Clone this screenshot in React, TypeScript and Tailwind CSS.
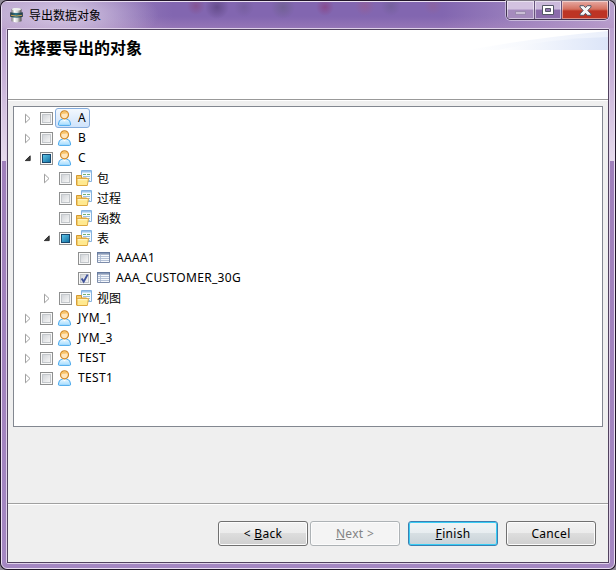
import React from 'react';

type Kind = 'user' | 'folder' | 'table';
type Check = 'none' | 'partial' | 'checked';
type Node = {
  label: string;
  depth: number;
  kind: Kind;
  check: Check;
  arrow?: 'open' | 'closed';
  selected?: boolean;
};

const nodes: Node[] = [
  { label: 'A', depth: 0, kind: 'user', check: 'none', arrow: 'closed', selected: true },
  { label: 'B', depth: 0, kind: 'user', check: 'none', arrow: 'closed' },
  { label: 'C', depth: 0, kind: 'user', check: 'partial', arrow: 'open' },
  { label: '包', depth: 1, kind: 'folder', check: 'none', arrow: 'closed' },
  { label: '过程', depth: 1, kind: 'folder', check: 'none' },
  { label: '函数', depth: 1, kind: 'folder', check: 'none' },
  { label: '表', depth: 1, kind: 'folder', check: 'partial', arrow: 'open' },
  { label: 'AAAA1', depth: 2, kind: 'table', check: 'none' },
  { label: 'AAA_CUSTOMER_30G', depth: 2, kind: 'table', check: 'checked' },
  { label: '视图', depth: 1, kind: 'folder', check: 'none', arrow: 'closed' },
  { label: 'JYM_1', depth: 0, kind: 'user', check: 'none', arrow: 'closed' },
  { label: 'JYM_3', depth: 0, kind: 'user', check: 'none', arrow: 'closed' },
  { label: 'TEST', depth: 0, kind: 'user', check: 'none', arrow: 'closed' },
  { label: 'TEST1', depth: 0, kind: 'user', check: 'none', arrow: 'closed' },
];

const indents = ['pl-[10px]', 'pl-[29px]', 'pl-[48px]'];

function Arrow({ kind }: { kind?: 'open' | 'closed' }) {
  return (
    <svg width="16" height="16" viewBox="0 0 16 16" className="shrink-0">
      {kind === 'closed' && <path d="M1.5 4.2v8.6L6 8.5z" fill="#fff" stroke="#a0a0a0" />}
      {kind === 'open' && <path d="M6.2 5.8v4.8H1.3z" fill="#404040" stroke="#262626" strokeWidth=".9" strokeLinejoin="round" />}
    </svg>
  );
}

function CheckBox({ state }: { state: Check }) {
  return (
    <span className="flex size-[13px] shrink-0 border border-[#8e8f8f] bg-[#f8f8f8] p-px">
      {state === 'partial' ? (
        <span className="size-[9px] border border-[#17486e] bg-linear-to-br from-[#5bc3e6] to-[#1274a5]" />
      ) : (
        <span className="size-[9px] border border-[#c3c7cb] bg-linear-to-br from-[#d2d5d9] to-[#f6f6f6]">
          {state === 'checked' && (
            <svg width="9" height="9" viewBox="0 0 9 9" className="-mt-px -ml-px overflow-visible">
              <path d="M1.6 4.4 3.7 7.6 7.6.6" fill="none" stroke="#40539b" strokeWidth="1.9" />
            </svg>
          )}
        </span>
      )}
    </span>
  );
}

function UserIcon() {
  return (
    <svg width="16" height="16" viewBox="0 0 16 16" className="shrink-0">
      <defs>
        <linearGradient id="body" x1="0" y1="0" x2="0" y2="1">
          <stop offset="0" stopColor="#e8f7ff" />
          <stop offset="1" stopColor="#a5dcff" />
        </linearGradient>
      </defs>
      <path d="M2.4 15.4q-1.1 0-1-1.3.2-4.3 3.6-5h5q3.400.7 3.600 5 .1 1.300-1 1.300z" fill="url(#body)" stroke="#4ba9ec" />
      <path d="m5.400 9.300 2.100 2.200 2.100-2.200z" fill="#fff" />
      <circle cx="7.500" cy="4.800" r="4" fill="#ffe6bd" stroke="#d18a28" strokeWidth="1.200" />
      <path d="M4 5c0-2.400 1.300-3.600 3.500-3.600S11 2.600 11 5c-.6-1.300-1.300-1.700-2.500-1.400C7 4 5.200 3.400 4 5" fill="#f8c368" />
    </svg>
  );
}

function FolderIcon() {
  return (
    <svg width="16" height="16" viewBox="0 0 16 16" className="shrink-0">
      <path d="M5.500.5h10v11h-10z" fill="#f7fbff" stroke="#86b3df" />
      <path d="M6 1h9v1.500H6z" fill="#9bc7ef" />
      <path d="M7 4.500h3M11 4.500h3" stroke="#72b27b" />
      <path d="M7 6.500h7M9 8.500h5M11 10.500h3" stroke="#9bc3e8" />
      <path d="M.5 15V5.500h5V8h5v7.500H1z" fill="#f6cb67" stroke="#d29a35" />
      <path d="M1 8.700h11.500L11.300 15.500H1z" fill="#ffe990" stroke="#dca53a" strokeWidth=".9" />
      <path d="M1.700 9.700h9.800" stroke="#fff9d5" />
    </svg>
  );
}

function TableIcon() {
  return (
    <svg width="16" height="16" viewBox="0 0 16 16" className="shrink-0">
      <path d="M2.500 2.500h12v10h-12z" fill="#f5f8fc" stroke="#7c8caa" />
      <path d="M2 2h13v2.500H2z" fill="#677b9f" />
      <path d="M3 3.500h11" stroke="#899bb9" />
      <path d="M3 6.500h11M3 8.500h11M3 10.500h11" stroke="#b4c1d6" />
      <path d="M5.500 5v7" stroke="#a8b8d0" strokeWidth=".8" />
    </svg>
  );
}

const icons = { user: UserIcon, folder: FolderIcon, table: TableIcon };

function TreeRow({ node }: { node: Node }) {
  const Icon = icons[node.kind];
  return (
    <div className={`flex h-5 items-center ${indents[node.depth]}`}>
      <Arrow kind={node.arrow} />
      <CheckBox state={node.check} />
      <span
        className={`ml-0.5 flex h-5 items-center gap-[5px] rounded-[3px] border pr-[3px] pl-px ${
          node.selected ? 'border-[#84acdd] bg-linear-to-b from-[#f3f8fe] to-[#cfe3fb]' : 'border-transparent'
        }`}
      >
        <Icon />
        <span className={`leading-[18px] whitespace-nowrap ${node.kind === 'folder' ? 'pt-px' : 'tracking-[0.32px]'}`}>
          {node.label}
        </span>
      </span>
    </div>
  );
}

function AppIcon() {
  return (
    <svg width="16" height="16" viewBox="0 0 16 16" className="shrink-0">
      <defs>
        <linearGradient id="metal" x1="0" y1="0" x2="1" y2="0">
          <stop offset="0" stopColor="#777" />
          <stop offset=".3" stopColor="#fff" />
          <stop offset=".6" stopColor="#d4d4d4" />
          <stop offset="1" stopColor="#4c4c4c" />
        </linearGradient>
        <linearGradient id="band" x1="0" y1="0" x2="1" y2="0">
          <stop offset="0" stopColor="#23363f" />
          <stop offset=".45" stopColor="#33788a" />
          <stop offset="1" stopColor="#1d333d" />
        </linearGradient>
      </defs>
      <path d="M2.500 2.300Q7.500-.4 12.500 2.300v12q-5 2.200-10 0z" fill="url(#metal)" />
      <path d="M1.200 5.300q6.300 1.400 12.600 0v4.500q-6.300 2-12.600 0z" fill="url(#band)" />
      <path d="M2 8.300q5.500 1.400 11 0" stroke="#c8a252" fill="none" />
      <ellipse cx="7.500" cy="2.300" rx="4.500" ry="1.300" fill="#eceeee" />
    </svg>
  );
}

function CaptionButtons() {
  return (
    <div className="flex h-[19px] w-[103px] shrink-0 overflow-hidden rounded-b-[5px] border border-t-0 border-[#40334f] shadow-[0_0_0_1px_#ffffff70]">
      <div className="flex w-[28px] items-center justify-center border-r border-[#65527b] bg-linear-to-b from-[#d3c2e0] from-45% to-[#a58bbd] to-50% inset-shadow-[0_0_0_1px_#ffffff80]">
        <span className="mt-[6px] h-1 w-[11px] border border-[#9b8baf] bg-[#cabed6]" />
      </div>
      <div className="flex w-[27px] items-center justify-center border-r border-[#65527b] bg-linear-to-b from-[#cbbadb] from-45% to-[#8b6cab] to-50% inset-shadow-[0_0_0_1px_#ffffff80]">
        <svg width="12" height="10" viewBox="0 0 12 10">
          <path d="M.5.5h11v9H.5z" fill="#fff" stroke="#535666" />
          <path d="M3.500 3.500h5v3h-5z" fill="#9276b1" stroke="#535666" />
        </svg>
      </div>
      <div className="flex flex-1 items-center justify-center bg-linear-to-b from-[#e5aaa4] from-0% via-[#d4705f] via-45% to-[#bd3424] to-55% inset-shadow-[0_0_0_1px_#ffffff70]">
        <svg width="13" height="11" viewBox="0 0 13 11">
          <path d="M1 .7h3.700l1.800 2 1.800-2H12v1.400L8.800 5.500 12 8.900v1.400H8.300l-1.800-2-1.800 2H1V8.900l3.200-3.400L1 2.100z" fill="#f7f7f7" stroke="#535666" />
        </svg>
      </div>
    </div>
  );
}

function WizardButton({ children, variant = 'normal', className = '' }: {
  children: React.ReactNode;
  variant?: 'normal' | 'disabled' | 'primary';
  className?: string;
}) {
  const look = {
    normal: 'border-[#707070] bg-[linear-gradient(#f2f2f2,#ebebeb_50%,#dddddd_50%,#cfcfcf)] inset-shadow-[0_0_0_1px_#fcfcfc]',
    disabled: 'border-[#adb2b5] bg-[#f4f4f4] text-[#838383] inset-shadow-[0_0_0_1px_#fcfcfc]',
    primary: 'border-[#3c7fb1] bg-[linear-gradient(#f0f4f5,#e7edf0_50%,#d7dfe3_50%,#c8d2d8)] inset-shadow-[0_0_0_1px_#38cdf5]',
  }[variant];
  return (
    <button className={`flex h-[25px] w-[90px] items-center justify-center rounded-[3px] border text-[12px] leading-none tracking-[0.3px] ${look} ${className}`}>
      <span className="whitespace-pre">{children}</span>
    </button>
  );
}

export default function App() {
  return (
    <div className="h-[570px] w-[616px] bg-[#8f8a96] font-['Noto_Sans','Noto_Sans_CJK_SC',sans-serif] text-[12px] text-black">
      <div className="h-full rounded-[7px] bg-[#211629] p-px">
        <div className="flex h-full flex-col rounded-[6px] border border-[#eadff2] bg-[linear-gradient(#b39aca,#c3abd5_60px,#e6daec_159px,#a080bb_159px,#a487c2)] px-1 pb-1">
          <div className="-mx-1 flex h-[26px] shrink-0 items-start rounded-t-[5px] bg-[radial-gradient(ellipse_95px_34px_at_62px_13px,#d8cbe5c0_20%,#d8cbe500),radial-gradient(circle_at_194px_4px,#87467c90,#87467c00_9px),radial-gradient(circle_at_215px_5px,#5c4580c0,#5c458000_12px),radial-gradient(circle_at_242px_5px,#6c589080,#6c589000_10px),radial-gradient(circle_at_281px_5px,#6b5f8ab0,#6b5f8a00_12px),radial-gradient(circle_at_323px_5px,#8a4080b0,#8a408000_9px),radial-gradient(circle_at_363px_4px,#965d94b0,#965d9400_10px),radial-gradient(circle_at_389px_4px,#6d5d92a0,#6d5d9200_10px),radial-gradient(circle_at_431px_4px,#91609690,#91609600_9px),linear-gradient(#8064ad00_55%,#b58fc060),linear-gradient(90deg,#b7a1cc,#8266b0_28%,#8266b0_72%,#b8a0ce)] pl-[7px]">
            <div className="flex h-full flex-1 items-center gap-1">
              <AppIcon />
              <span className="pt-px leading-4">导出数据对象</span>
            </div>
            <div className="-mt-px mr-[5px]"><CaptionButtons /></div>
          </div>
          <div className="min-h-0 flex-1 rounded-[2px] border border-[#dfd1e9]">
            <div className="flex h-full flex-col border border-[#51425f] bg-[#efefef]">
              <header className="flex h-[70px] shrink-0 justify-between border-b border-[#999999] bg-white pl-1.5">
                <h1 className="pt-1.5 text-[16px] leading-6 font-bold">选择要导出的对象</h1>
                <svg width="150" height="20" viewBox="0 0 150 20">
                  <defs>
                    <linearGradient id="sweep" x1="0" y1="0" x2="1" y2="0">
                      <stop offset="0" stopColor="#fff" />
                      <stop offset="1" stopColor="#dce5f8" />
                    </linearGradient>
                  </defs>
                  <path d="M10 20Q75 8 150 1v19z" fill="url(#sweep)" opacity=".6" />
                  <path d="M40 20Q90 9 150 7v13z" fill="url(#sweep)" />
                </svg>
              </header>
              <main className="flex flex-1 flex-col border-t border-white px-[5px] pt-[5px]">
                <div className="h-[321px] w-[590px] border border-[#828790] bg-white pt-px">
                  {nodes.map((node) => <TreeRow key={node.label} node={node} />)}
                </div>
              </main>
              <footer className="h-[59px] shrink-0 border-t border-[#a0a0a0]">
                <div className="flex justify-end border-t border-white pt-4 pr-3">
                  <WizardButton>{'< '}<u>B</u>ack</WizardButton>
                  <WizardButton variant="disabled" className="ml-0.5"><u>N</u>ext &gt;</WizardButton>
                  <WizardButton variant="primary" className="ml-2"><u>F</u>inish</WizardButton>
                  <WizardButton className="ml-2">Cancel</WizardButton>
                </div>
              </footer>
            </div>
          </div>
        </div>
      </div>
    </div>
  );
}
